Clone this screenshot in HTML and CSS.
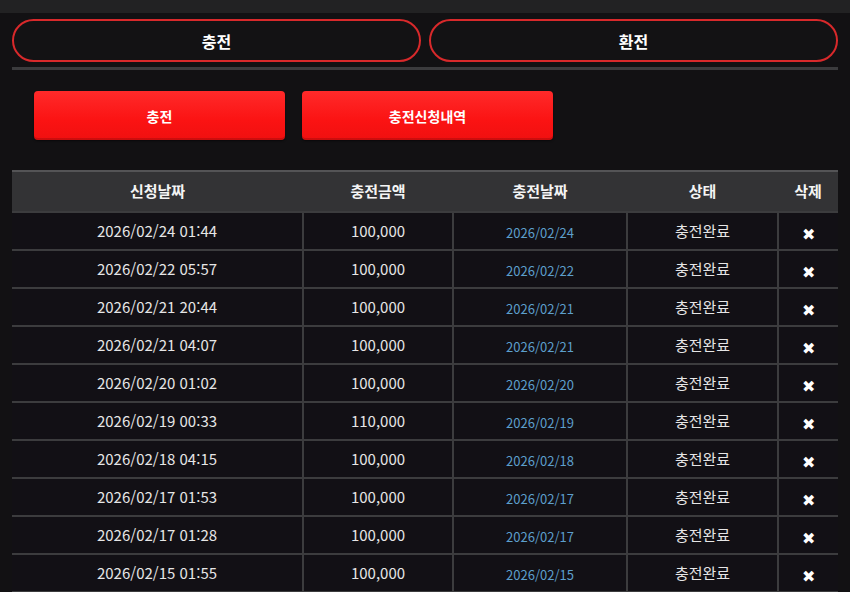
FILE: index.html
```html
<!DOCTYPE html>
<html lang="ko">
<head>
    <meta charset="UTF-8">
    <title>충전</title>
    <link rel="stylesheet" href="styles.css">
</head>
<body>
<div class="topbar"></div>
<div class="wrap">
    <!--충전 / 환전 탭-->
    <div class="tabs">
        <a href="javascript:;" class="tab">충전</a>
        <a href="javascript:;" class="tab">환전</a>
    </div>
    <div class="divider"></div>

    <div class="btns">
        <a href="javascript:;" class="red-btn">충전</a>
        <a href="javascript:;" class="red-btn">충전신청내역</a>
    </div>

    <!--충전신청내역 테이블-->
    <table class="list">
        <thead>
        <tr>
            <th class="c1">신청날짜</th>
            <th class="c2">충전금액</th>
            <th class="c3">충전날짜</th>
            <th class="c4">상태</th>
            <th class="c5">삭제</th>
        </tr>
        </thead>
        <tbody>
        <tr><td>2026/02/24 01:44</td><td>100,000</td><td class="date">2026/02/24</td><td>충전완료</td><td class="del">&#10006;</td></tr>
        <tr><td>2026/02/22 05:57</td><td>100,000</td><td class="date">2026/02/22</td><td>충전완료</td><td class="del">&#10006;</td></tr>
        <tr><td>2026/02/21 20:44</td><td>100,000</td><td class="date">2026/02/21</td><td>충전완료</td><td class="del">&#10006;</td></tr>
        <tr><td>2026/02/21 04:07</td><td>100,000</td><td class="date">2026/02/21</td><td>충전완료</td><td class="del">&#10006;</td></tr>
        <tr><td>2026/02/20 01:02</td><td>100,000</td><td class="date">2026/02/20</td><td>충전완료</td><td class="del">&#10006;</td></tr>
        <tr><td>2026/02/19 00:33</td><td>110,000</td><td class="date">2026/02/19</td><td>충전완료</td><td class="del">&#10006;</td></tr>
        <tr><td>2026/02/18 04:15</td><td>100,000</td><td class="date">2026/02/18</td><td>충전완료</td><td class="del">&#10006;</td></tr>
        <tr><td>2026/02/17 01:53</td><td>100,000</td><td class="date">2026/02/17</td><td>충전완료</td><td class="del">&#10006;</td></tr>
        <tr><td>2026/02/17 01:28</td><td>100,000</td><td class="date">2026/02/17</td><td>충전완료</td><td class="del">&#10006;</td></tr>
        <tr><td>2026/02/15 01:55</td><td>100,000</td><td class="date">2026/02/15</td><td>충전완료</td><td class="del">&#10006;</td></tr>
        </tbody>
    </table>
</div>
</body>
</html>
```

FILE: styles.css
```css
*{
    margin: 0;
    padding: 0;
    box-sizing: border-box;
}
body{
    background-color: #121113;
    color: #fff;
    font-family: "Noto Sans CJK KR", "Noto Sans", sans-serif;
    overflow: hidden;
}
a{
    color: #fff;
    text-decoration: none;
}
.topbar{
    height: 13px;
    background-color: #222223;
}
.wrap{
    padding: 6px 12px 0;
}
/*상단 탭*/
.tabs{
    display: flex;
    gap: 8px;
}
.tab{
    flex: 1;
    height: 43px;
    border: 2px solid #d8292b;
    border-radius: 22px;
    background-color: #131214;
    display: flex;
    align-items: center;
    justify-content: center;
    font-size: 16px;
    font-weight: bold;
}
.divider{
    height: 3px;
    margin-top: 5px;
    background-color: #3b3b3d;
}
/*빨간 버튼*/
.btns{
    display: flex;
    gap: 17px;
    padding: 21px 0 0 22px;
}
.red-btn{
    width: 251px;
    height: 49px;
    border-radius: 4px;
    background: linear-gradient(#ff2a2a, #fb1313 60%, #f01010);
    box-shadow: inset 0 -2px 0 rgba(0,0,0,0.15), 0 1px 2px rgba(0,0,0,0.5);
    display: flex;
    align-items: center;
    justify-content: center;
    font-size: 14px;
    font-weight: bold;
}
/*내역 테이블*/
.list{
    width: 100%;
    margin-top: 30px;
    border-collapse: collapse;
    table-layout: fixed;
}
.list th{
    height: 41px;
    padding-bottom: 2px;
    background-color: #333335;
    border-top: 2px solid #545456;
    border-bottom: 2px solid #3c3c3e;
    font-size: 15px;
    font-weight: bold;
    color: #f4f4f4;
}
.list td{
    height: 38px;
    border: 2px solid #3c3c3e;
    background-color: #121015;
    text-align: center;
    font-size: 15px;
    color: #e6e6e6;
    padding-bottom: 2px;
}
.list tr td:first-child{
    border-left: 0;
}
.list tr td:last-child{
    border-right: 0;
}
.c1{ width: 291px; }
.c2{ width: 150px; }
.c3{ width: 174px; }
.c4{ width: 151px; }
.list td.date{
    color: #5d9fcc;
    font-size: 13px;
    padding: 3px 0 0;
}
.list td.del{
    color: #fff;
    font-size: 16px;
    padding: 3px 0 0;
}
```
